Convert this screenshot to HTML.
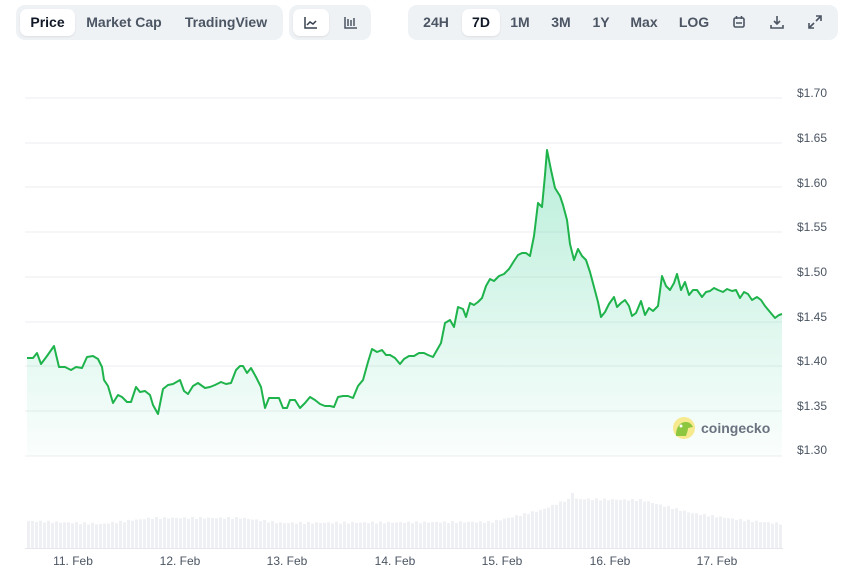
<!DOCTYPE html>
<html><head><meta charset="utf-8"><style>
body{margin:0;width:845px;height:575px;background:#fff;font-family:"Liberation Sans",sans-serif;position:relative;overflow:hidden}
.g{position:absolute;top:5px;height:35px;background:#eff2f5;border-radius:9px}
.b{position:absolute;top:4px;height:27px;line-height:27px;font-size:14px;font-weight:bold;color:#4b5563;text-align:center}
.w{background:#fff;border-radius:7px;color:#111827;box-shadow:0 1px 2px rgba(0,0,0,.08)}
.yl{position:absolute;left:797px;font-size:12px;color:#4b5563}
.xl{position:absolute;top:554px;font-size:12px;color:#4b5563;width:60px;text-align:center}
</style></head><body>
<div class="g" style="left:16px;width:267px">
<div class="b w" style="left:4px;width:55px">Price</div>
<div class="b" style="left:66px;width:84px">Market Cap</div>
<div class="b" style="left:162px;width:96px">TradingView</div>
</div>
<div class="g" style="left:289px;width:82px">
<div class="b w" style="left:4px;width:36px"><svg width="16" height="16" viewBox="0 0 16 16" style="margin-top:6px"><path d="M2 2v11h12M4 10l3-3 3 2 3-3" fill="none" stroke="#374151" stroke-width="1.5"/></svg></div>
<div class="b" style="left:44px;width:36px"><svg width="16" height="16" viewBox="0 0 16 16" style="margin-top:6px"><path d="M2 2v11h12M5 4v7M8 5v6M11 3v8" fill="none" stroke="#4b5563" stroke-width="1.5"/></svg></div>
</div>
<div class="g" style="left:408px;width:430px">
<div class="b" style="left:6px;width:44px">24H</div>
<div class="b w" style="left:54px;width:38px">7D</div>
<div class="b" style="left:96px;width:32px">1M</div>
<div class="b" style="left:136px;width:34px">3M</div>
<div class="b" style="left:178px;width:30px">1Y</div>
<div class="b" style="left:214px;width:44px">Max</div>
<div class="b" style="left:264px;width:44px">LOG</div>
<div class="b" style="left:316px;width:30px"><svg width="14" height="14" viewBox="0 0 14 14" style="margin-top:6px"><rect x="2" y="3" width="10" height="9" rx="1.5" fill="none" stroke="#4b5563" stroke-width="1.6"/><path d="M4.5 1v3M9.5 1v3M4 8h6" stroke="#4b5563" stroke-width="1.6"/></svg></div>
<div class="b" style="left:354px;width:30px"><svg width="16" height="16" viewBox="0 0 16 16" style="margin-top:5px"><path d="M8 2v8M5 7l3 3 3-3M2 11v3h12v-3" fill="none" stroke="#4b5563" stroke-width="1.6"/></svg></div>
<div class="b" style="left:392px;width:30px"><svg width="16" height="16" viewBox="0 0 16 16" style="margin-top:5px"><path d="M9 2h5v5M14 2l-5 5M7 14H2V9M2 14l5-5" fill="none" stroke="#4b5563" stroke-width="1.6"/></svg></div>
</div>
<svg width="845" height="575" style="position:absolute;left:0;top:0" id="s">
<defs><linearGradient id="gr" x1="0" y1="0" x2="0" y2="1"><stop offset="0" stop-color="#16c784" stop-opacity=".3"/><stop offset="1" stop-color="#16c784" stop-opacity=".02"/></linearGradient></defs>
<g stroke="#eceef1" stroke-width="1">
<line x1="25" x2="782" y1="98" y2="98"/><line x1="25" x2="782" y1="143" y2="143"/><line x1="25" x2="782" y1="187" y2="187"/><line x1="25" x2="782" y1="232" y2="232"/><line x1="25" x2="782" y1="277" y2="277"/><line x1="25" x2="782" y1="322" y2="322"/><line x1="25" x2="782" y1="366" y2="366"/><line x1="25" x2="782" y1="411" y2="411"/><line x1="25" x2="782" y1="456" y2="456"/>
</g>
<g id="vol" fill="#eef0f3"></g>
<path id="area" fill="url(#gr)"/>
<polyline id="line" fill="none" stroke="#1fb34c" stroke-width="2" stroke-linejoin="round"/>
<g stroke="#e5e7eb"><line x1="25" x2="783" y1="548.5" y2="548.5"/></g>
<circle cx="684" cy="428" r="11" fill="#f7e98e"/><path d="M676 436c0-9 4-14 10-14 4 0 6 3 7 5l-5 1c0 3-2 7-2 8z" fill="#8dc63f"/><circle cx="681" cy="426" r="1.5" fill="#fff"/>
<text x="701" y="433" font-family="Liberation Sans" font-size="14" font-weight="bold" fill="#6b7280">coingecko</text>
</svg>
<div class="yl" style="top:86px">$1.70</div><div class="yl" style="top:131px">$1.65</div><div class="yl" style="top:176px">$1.60</div><div class="yl" style="top:220px">$1.55</div><div class="yl" style="top:265px">$1.50</div><div class="yl" style="top:310px">$1.45</div><div class="yl" style="top:354px">$1.40</div><div class="yl" style="top:399px">$1.35</div><div class="yl" style="top:443px">$1.30</div>
<div class="xl" style="left:43px">11. Feb</div><div class="xl" style="left:150px">12. Feb</div><div class="xl" style="left:257px">13. Feb</div><div class="xl" style="left:365px">14. Feb</div><div class="xl" style="left:472px">15. Feb</div><div class="xl" style="left:580px">16. Feb</div><div class="xl" style="left:687px">17. Feb</div>
<script>
var p="27,358 33,358 37,353 41,364 47,356 54,346 59,367 65,367 71,370 76,367 82,368 87,357 93,356 98,359 102,367 104,380 108,386 113,403 118,395 122,397 127,402 131,402 136,387 140,392 145,391 150,395 153,405 158,414 163,389 168,385 173,384 180,380 184,391 188,394 193,386 198,383 205,388 210,387 215,385 221,382 226,384 231,383 236,370 240,366 243,366 247,373 251,368 256,377 261,387 265,408 269,398 274,398 279,398 283,408 287,408 290,400 295,400 300,408 305,403 310,397 315,400 320,404 325,406 330,406 334,407 338,397 343,396 348,396 353,398 358,386 363,380 368,362 372,349 377,352 382,350 386,355 390,355 395,358 400,364 404,359 409,356 414,356 419,353 424,353 428,355 433,357 437,350 441,343 445,323 450,320 454,327 458,307 463,309 466,317 470,303 474,305 478,302 482,298 486,286 490,279 494,281 499,276 504,274 509,269 514,261 518,255 522,253 526,253 530,256 534,236 538,203 542,207 545,175 547,150 551,170 555,188 560,196 563,205 567,220 570,244 574,260 578,249 582,256 586,260 590,272 594,287 598,302 601,317 605,312 609,304 614,297 617,307 621,303 625,300 629,306 632,316 636,313 641,301 645,315 649,308 653,311 658,306 662,276 666,286 670,290 674,283 677,274 681,290 685,282 689,295 693,290 697,290 702,297 706,292 710,291 714,288 718,290 723,292 727,289 732,291 736,290 740,298 744,292 748,294 752,300 757,297 761,300 765,306 770,312 775,318 779,315 782,314";
document.getElementById('line').setAttribute('points',p);
document.getElementById('area').setAttribute('d','M'+p.split(' ').join(' L')+' L782,456 L27,456 Z');
var kx=[27,100,150,240,280,470,490,540,565,575,640,690,740,783],kh=[27,24,30,30,25,26,26,38,48,49,48,35,28,24];
function h(x){for(var i=0;i<kx.length-1;i++)if(x<=kx[i+1]){var t=(x-kx[i])/(kx[i+1]-kx[i]);return kh[i]+t*(kh[i+1]-kh[i]);}return 24;}
var s='';for(var x=27;x<782;x+=4){var hh=h(x)+Math.sin(x*0.7)*1;if(x>=568&&x<572)hh=55;s+='<rect x="'+x+'" y="'+(548-hh)+'" width="3" height="'+hh+'"/>';}
document.getElementById('vol').innerHTML=s;
</script>
</body></html>
